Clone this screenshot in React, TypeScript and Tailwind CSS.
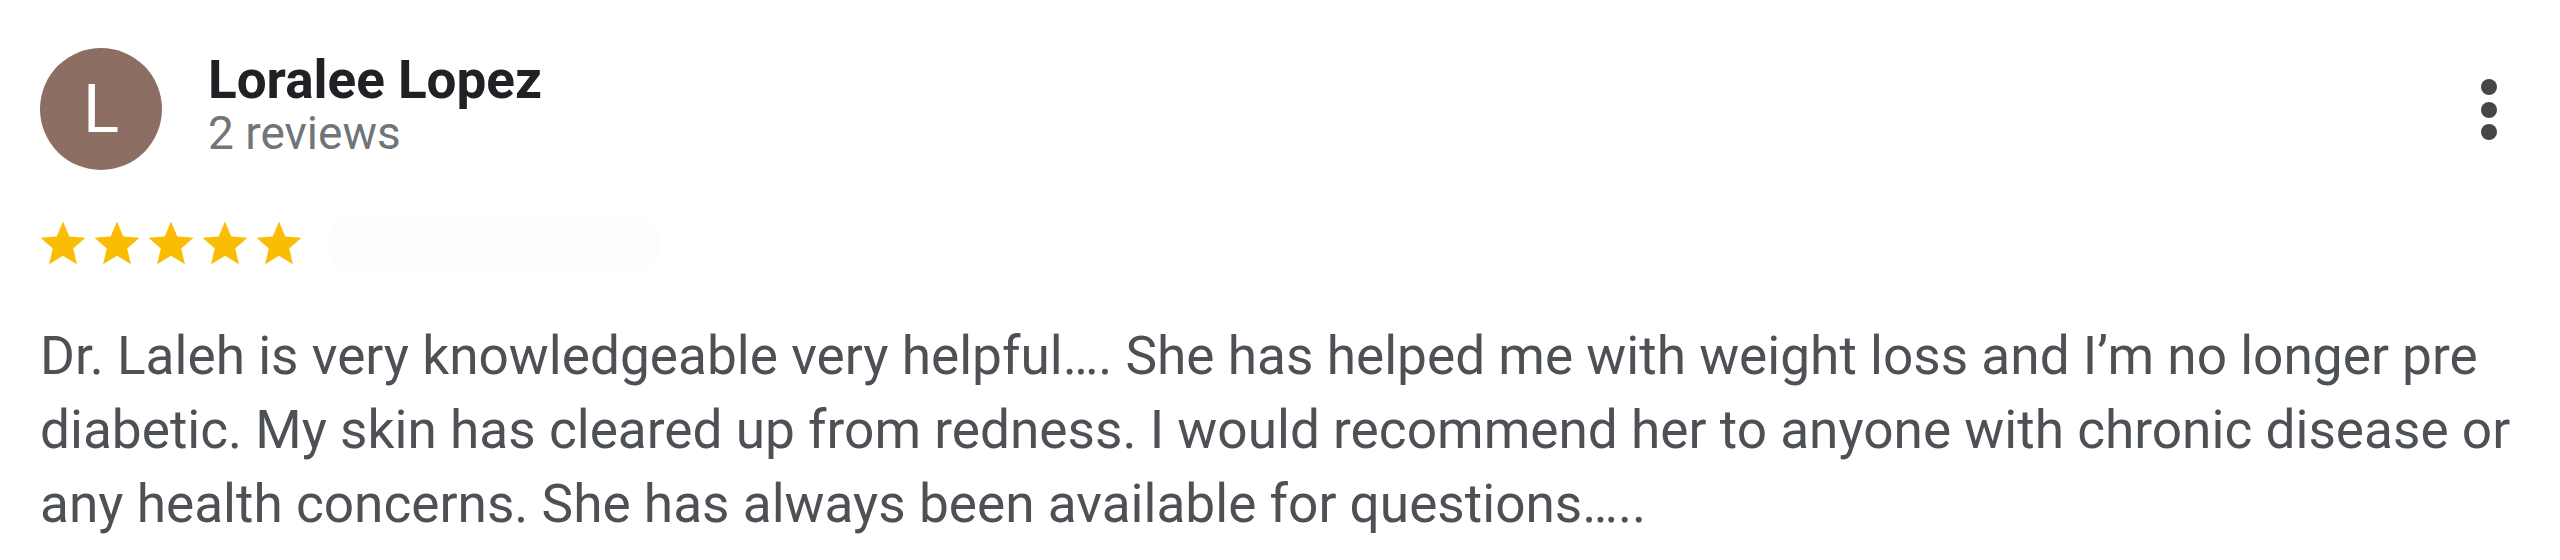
const Star = () => (
  <svg viewBox="0 0 24 24" className="w-[54px] h-[54px] shrink-0" fill="#fbbc04">
    <path d="M12 17.27L18.18 21l-1.64-7.03L22 9.24l-7.19-.61L12 2 9.19 8.63 2 9.24l5.46 4.73L5.82 21z" />
  </svg>
);

const ReviewCard = () => {
  return (
    <div className="w-[2560px] h-[560px] bg-white pl-10 pr-10 font-['Roboto',sans-serif]">
      <div className="flex items-start justify-between pt-12">
        <div className="flex items-start gap-[46px]">
          <div className="w-[122px] h-[122px] rounded-full bg-[#8d6e63] flex items-center justify-center text-white text-[67px] leading-none">
            L
          </div>
          <div className="mt-[2px] flex flex-col">
            <span className="text-[53px] leading-[60px] font-bold text-[#202124]">Loralee Lopez</span>
            <span className="text-[46px] leading-[46px] text-[#70757a]">2 reviews</span>
          </div>
        </div>
        <div className="mt-[31px] mr-[23px] flex flex-col gap-[6.5px]">
          <div className="w-4 h-4 rounded-full bg-[#444746]" />
          <div className="w-4 h-4 rounded-full bg-[#444746]" />
          <div className="w-4 h-4 rounded-full bg-[#444746]" />
        </div>
      </div>
      <div className="mt-[43.5px] flex items-center">
        <div className="-ml-[4.5px] flex">
          <Star />
          <Star />
          <Star />
          <Star />
          <Star />
        </div>
        <div className="ml-[22px] w-[332px] h-[60px] rounded-full bg-[#fdfdfd]" />
      </div>
      <p className="mt-[45px] text-[53.2px] leading-[74px] text-[#4d5156]">
        Dr. Laleh is very knowledgeable very helpful…. She has helped me with weight loss and I’m no longer pre
        diabetic. My skin has cleared up from redness. I would recommend her to anyone with chronic disease or
        any health concerns. She has always been available for questions…..
      </p>
    </div>
  );
};

export default function App() {
  return <ReviewCard />;
}
